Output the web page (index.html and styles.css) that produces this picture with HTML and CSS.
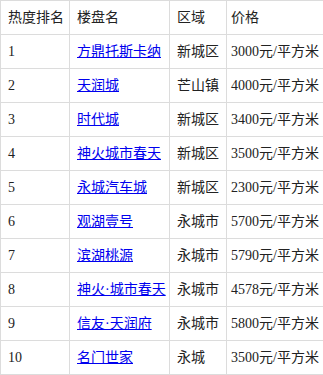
FILE: index.html
```html
<!DOCTYPE html>
<html lang="zh">
<head>
<meta charset="utf-8">
<link rel="stylesheet" href="styles.css">
</head>
<body>
<table class="rank">
  <colgroup>
    <col class="c-rank">
    <col class="c-name">
    <col class="c-area">
    <col class="c-price">
  </colgroup>
  <thead>
    <tr><th>热度排名</th><th>楼盘名</th><th>区域</th><th class="price">价格</th></tr>
  </thead>
  <tbody>
    <tr><td>1</td><td><a href="#">方鼎托斯卡纳</a></td><td>新城区</td><td class="price">3000元/平方米</td></tr>
    <tr><td>2</td><td><a href="#">天润城</a></td><td>芒山镇</td><td class="price">4000元/平方米</td></tr>
    <tr><td>3</td><td><a href="#">时代城</a></td><td>新城区</td><td class="price">3400元/平方米</td></tr>
    <tr><td>4</td><td><a href="#">神火城市春天</a></td><td>新城区</td><td class="price">3500元/平方米</td></tr>
    <tr><td>5</td><td><a href="#">永城汽车城</a></td><td>新城区</td><td class="price">2300元/平方米</td></tr>
    <tr><td>6</td><td><a href="#">观湖壹号</a></td><td>永城市</td><td class="price">5700元/平方米</td></tr>
    <tr><td>7</td><td><a href="#">滨湖桃源</a></td><td>永城市</td><td class="price">5790元/平方米</td></tr>
    <tr><td>8</td><td><a href="#">神火·城市春天</a></td><td>永城市</td><td class="price">4578元/平方米</td></tr>
    <tr><td>9</td><td><a href="#">信友·天润府</a></td><td>永城市</td><td class="price">5800元/平方米</td></tr>
    <tr><td>10</td><td><a href="#">名门世家</a></td><td>永城</td><td class="price">3500元/平方米</td></tr>
  </tbody>
</table>
</body>
</html>
```

FILE: styles.css
```css
html, body {
  margin: 0;
  padding: 0;
  background: #fff;
}

.rank {
  border-collapse: collapse;
  table-layout: fixed;
  width: 323px;
  font-family: "Liberation Serif", "Noto Sans CJK SC", serif;
  font-size: 14px;
  line-height: 18px;
  color: #222;
}

.c-rank { width: 69px; }
.c-name { width: 100px; }
.c-area { width: 57px; }
.c-price { width: 97px; }

.rank th,
.rank td {
  border: 1px solid #dcdcdc;
  height: 33px;
  padding: 0 0 0 7px;
  text-align: left;
  font-weight: normal;
  vertical-align: middle;
  white-space: nowrap;
}

.rank .price {
  padding-left: 4px;
}

.rank a {
  color: #0000ee;
  text-decoration: underline;
}
```
